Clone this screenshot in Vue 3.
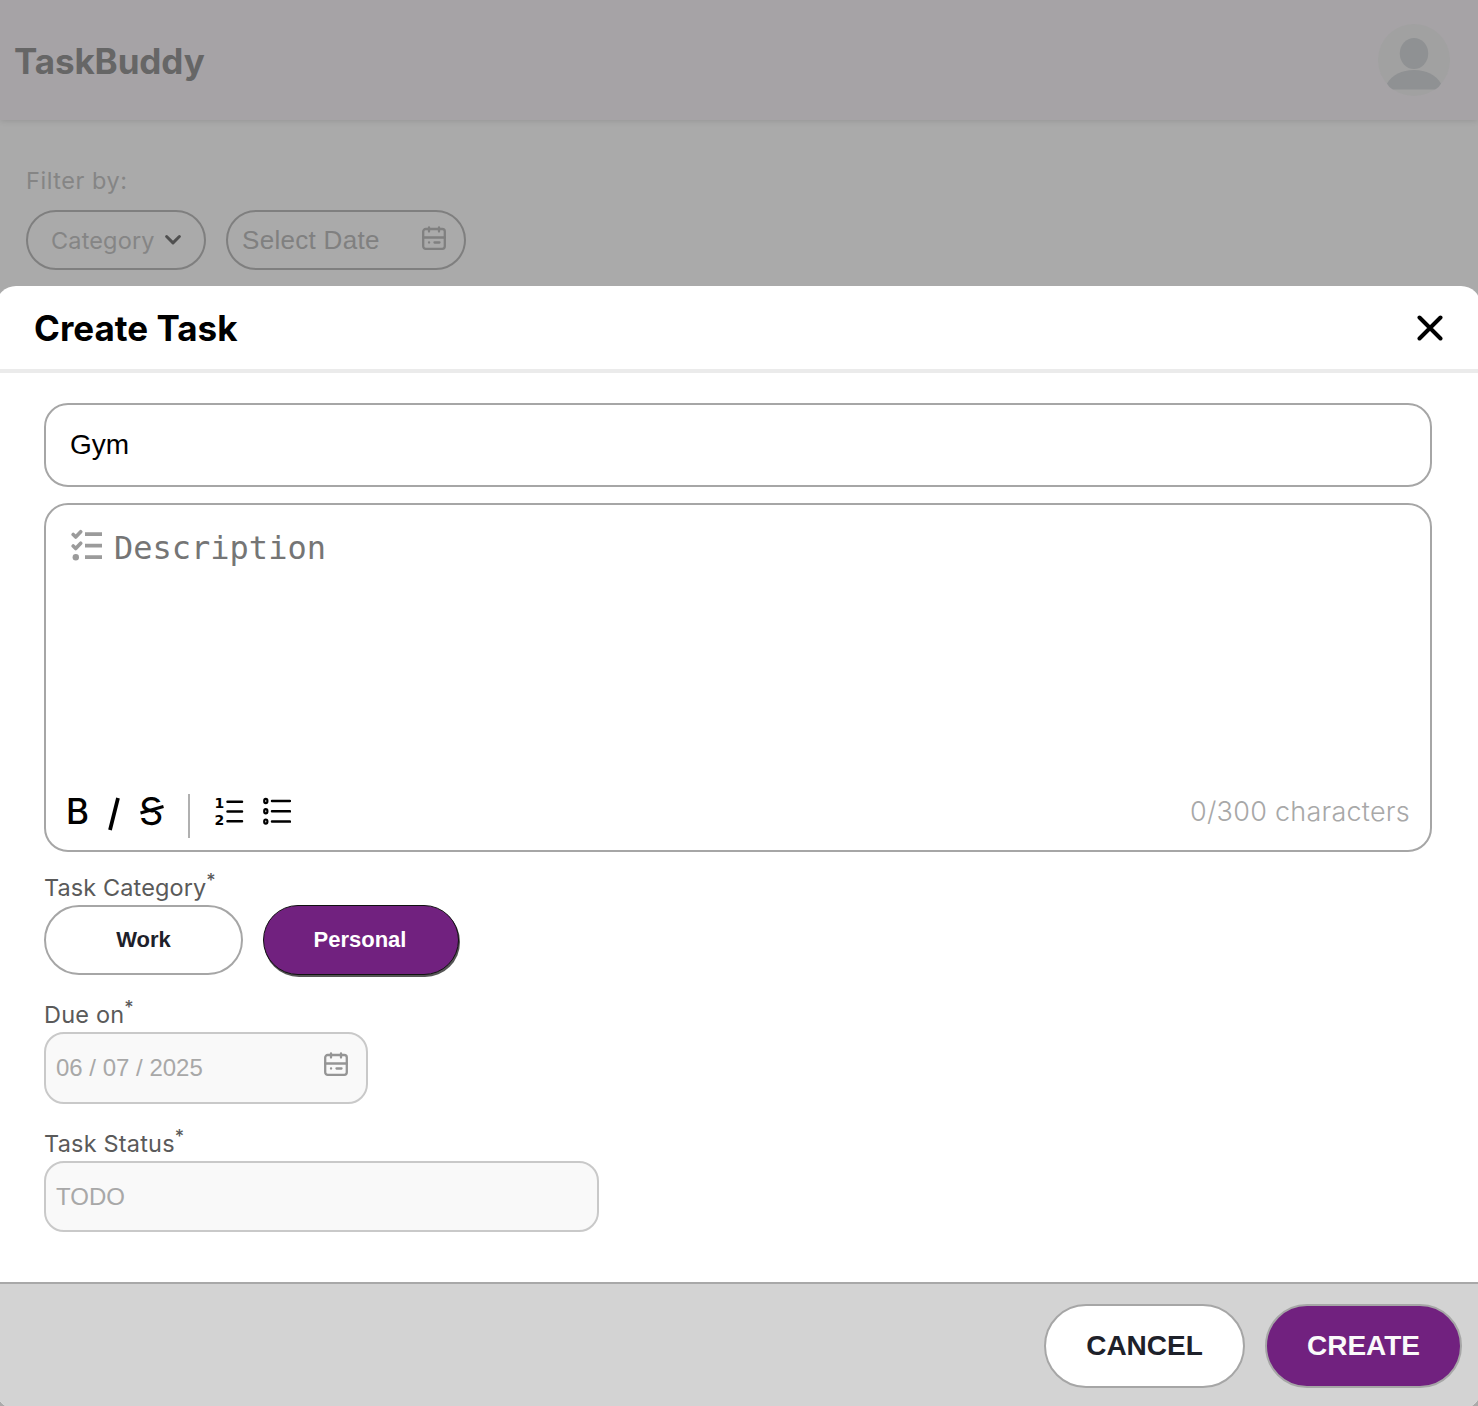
<script setup>
import { ref } from 'vue'

const title = ref('Gym')
const categories = ['Work', 'Personal']
const selected = ref('Personal')
const dueDate = '06 / 07 / 2025'
const status = 'TODO'
</script>

<template>
  <div class="page">
    <header class="topbar">
      <div class="brand">TaskBuddy</div>
      <svg class="avatar" width="72" height="72" viewBox="0 0 72 72">
        <circle cx="36" cy="36" r="36" fill="#a1a1a1" />
        <ellipse cx="36" cy="29.500" rx="14.200" ry="15.500" fill="#8f9193" />
        <path d="M9 59.500C14 51 24 46 36 46s22 5 27 13.500c-1.500 2.500-3 4.500-6 6H15c-3-1.500-4.500-3.500-6-6z" fill="#8f9193" />
      </svg>
    </header>

    <main class="filters">
      <div class="filter-label">Filter by:</div>
      <div class="filter-row">
        <div class="pill category">
          <span class="category-text">Category</span>
          <svg width="18" height="12" viewBox="0 0 18 12" fill="none" stroke="#505050" stroke-width="3" stroke-linecap="round" stroke-linejoin="round">
            <path d="M2.600 2.500 9 8.900l6.400-6.400" />
          </svg>
        </div>
        <div class="pill date">
          <span class="date-text">Select Date</span>
          <svg class="calendar" width="24" height="24" viewBox="0 0 24 24" fill="none" stroke="#808080" stroke-width="2.300" stroke-linecap="round">
            <rect x="1.200" y="3" width="21.600" height="19.800" rx="2.500" />
            <path d="M1.200 11.500h21.600M7 1.500v4M17 1.500v4M12.500 16.500h5M7 16.500h.1" />
          </svg>
        </div>
      </div>
    </main>

    <section class="modal">
      <div class="modal-head">
        <h2>Create Task</h2>
        <svg class="close" width="26" height="26" viewBox="0 0 26 26" stroke="#000" stroke-width="4" stroke-linecap="round">
          <path d="M2.500 2.500l21 21M23.500 2.500l-21 21" />
        </svg>
      </div>

      <div class="modal-body">
        <div class="title-box">{{ title }}</div>

        <div class="description-box">
          <div class="placeholder">
            <svg width="33" height="33" viewBox="0 0 33 33" fill="none" stroke="#9b9b9b">
              <path d="M14 6.200H31M14 17.700H31M14 29.200H31" stroke-width="3.800" />
              <path d="M2.200 6.500l2.500 2.500 5-5.300M2.200 18l2.500 2.500 5-5.300" stroke-width="3.600" stroke-linecap="round" stroke-linejoin="round" />
              <circle cx="4.800" cy="29.200" r="3.200" fill="#9b9b9b" stroke="none" />
            </svg>
            <span class="placeholder-text">Description</span>
          </div>
          <div class="toolbar">
            <span class="tool bold">B</span>
            <svg class="tool italic" width="12" height="34" viewBox="0 0 12 34">
              <path d="M2 33 10 1" stroke="#000" stroke-width="3.800" />
            </svg>
            <span class="tool strike">S
              <svg width="26" height="16" viewBox="0 0 26 16">
                <path d="M10 4.500 24 .5M2 15.500 16 11.500" stroke="#fff" stroke-width="3" />
                <path d="M1.500 11 24.500 4.500" stroke="#000" stroke-width="3" />
              </svg>
            </span>
            <span class="divider"></span>
            <svg class="tool numbered" width="28" height="32" viewBox="0 0 28 32">
              <path d="M12.500 5.700h14.500M12.500 15.500h14.500M12.500 25.300h14.500" stroke="#000" stroke-width="2.500" stroke-linecap="round" />
              <text x="-0.500" y="12" class="digit">1</text>
              <text x="-0.500" y="29" class="digit">2</text>
            </svg>
            <svg class="tool bulleted" width="28" height="32" viewBox="0 0 28 32" fill="none" stroke="#000">
              <path d="M9 5h18M9 15.300h18M9 25.600h18" stroke-width="2.500" stroke-linecap="round" />
              <ellipse cx="2.800" cy="5" rx="1.600" ry="2.100" stroke-width="2.200" />
              <ellipse cx="2.800" cy="15.300" rx="1.600" ry="2.100" stroke-width="2.200" />
              <ellipse cx="2.800" cy="25.600" rx="1.600" ry="2.100" stroke-width="2.200" />
            </svg>
            <span class="counter">0/300 characters</span>
          </div>
        </div>

        <div class="label category-label">Task Category<sup>*</sup></div>
        <div class="choices">
          <button v-for="c in categories" :key="c" class="choice" :class="{ active: c === selected }" @click="selected = c">{{ c }}</button>
        </div>

        <div class="label due-label">Due on<sup>*</sup></div>
        <div class="field due-field">
          <span>{{ dueDate }}</span>
          <svg class="calendar" width="24" height="24" viewBox="0 0 24 24" fill="none" stroke="#959595" stroke-width="2.300" stroke-linecap="round">
            <rect x="1.200" y="3" width="21.600" height="19.800" rx="2.500" />
            <path d="M1.200 11.500h21.600M7 1.500v4M17 1.500v4M12.500 16.500h5M7 16.500h.1" />
          </svg>
        </div>

        <div class="label status-label">Task Status<sup>*</sup></div>
        <div class="field status-field"><span>{{ status }}</span></div>
      </div>

      <footer class="modal-foot">
        <button class="action cancel">CANCEL</button>
        <button class="action create">CREATE</button>
      </footer>
    </section>
  </div>
</template>

<style>
body { background: #aaa; }
</style>

<style scoped>
.page {
  position: relative;
  width: 1478px;
  height: 1406px;
  overflow: hidden;
  background: #aaa;
  font-family: Inter, sans-serif;
}
.page * { box-sizing: border-box; }
svg { display: block; flex: none; }
button { margin: 0; padding: 0; }

.topbar {
  height: 120px;
  padding: 0 28px 0 14px;
  display: flex;
  align-items: center;
  justify-content: space-between;
  background: #a6a3a6;
  box-shadow: 0 1px 6px rgba(0, 0, 0, 0.12);
}
.brand {
  font-size: 35px;
  font-weight: 700;
  line-height: 40px;
  letter-spacing: -0.1px;
  color: #666;
  padding-top: 1px;
}

.filters { padding: 46px 26px 0; }
.filter-label {
  height: 44px;
  line-height: 30px;
  font-size: 23.500px;
  letter-spacing: 0.55px;
  color: #858585;
}
.filter-row { display: flex; gap: 20px; }
.pill {
  height: 60px;
  border: 2px solid #7f7f7f;
  border-radius: 30px;
  display: flex;
  align-items: center;
}
.category { width: 180px; padding-left: 23px; gap: 11px; color: #858585; }
.category-text { width: 102px; font-size: 23.500px; letter-spacing: 0.15px; white-space: nowrap; }
.date {
  width: 240px;
  padding: 0 18px 0 14px;
  justify-content: space-between;
  font-family: "Liberation Sans", sans-serif;
  font-size: 26px;
  letter-spacing: 0.3px;
  color: #808080;
}
.date .calendar { margin-top: -4px; }

.modal {
  position: absolute;
  left: -4px;
  top: 286px;
  width: 1485px;
  height: 1123px;
  border-radius: 20px;
  overflow: hidden;
  background: #fff;
  display: flex;
  flex-direction: column;
}
.modal-head {
  height: 87px;
  flex: none;
  border-bottom: 4px solid #ebebeb;
  padding: 0 38px;
  display: flex;
  align-items: center;
  justify-content: space-between;
}
h2 {
  margin: 0;
  font-size: 35px;
  line-height: 40px;
  font-weight: 700;
  color: #000;
}
.modal-body {
  flex: 1;
  padding: 30px 49px 0 48px;
  display: flex;
  flex-direction: column;
  align-items: flex-start;
}
.title-box {
  width: 1388px;
  height: 84px;
  padding-left: 24px;
  border: 2px solid #a6a6a6;
  border-radius: 24px;
  font: 28px/80px "Liberation Sans", sans-serif;
  color: #000;
}
.description-box {
  width: 1388px;
  height: 349px;
  margin-top: 16px;
  padding: 23px 20px 11px 20px;
  border: 2px solid #a6a6a6;
  border-radius: 24px;
  display: flex;
  flex-direction: column;
  justify-content: space-between;
}
.placeholder { display: flex; padding-left: 5px; gap: 10px; }
.placeholder-text {
  font: 32px/40px "DejaVu Sans Mono", monospace;
  color: #757575;
}
.toolbar { height: 46px; display: flex; align-items: center; color: #000; }
.tool, .counter { margin-bottom: 9px; }
.bold { width: 42px; margin-bottom: 11px; font-size: 35px; font-weight: 500; line-height: 40px; }
.italic { margin-bottom: 5px; }
.strike {
  position: relative;
  width: 27px;
  margin-left: 19px;
  margin-bottom: 10px;
  font-size: 38px;
  line-height: 40px;
  font-weight: 400;
}
.strike svg { position: absolute; left: 0; top: 11px; }
.divider { width: 2px; height: 44px; margin-left: 22px; background: #b0b0b0; }
.numbered { margin-left: 25px; overflow: visible; }
.digit { font: 700 14px "DejaVu Sans", sans-serif; fill: #000; }
.bulleted { margin-left: 20px; }
.counter {
  margin-left: auto;
  font-size: 27px;
  font-weight: 300;
  letter-spacing: 0.25px;
  color: #a8a8a8;
}

.label {
  height: 30px;
  line-height: 32px;
  font-size: 23.500px;
  color: #5a5a5a;
  white-space: nowrap;
}
.label sup { font-size: 18px; line-height: 0; vertical-align: 9px; font-weight: 500; }
.category-label { margin-top: 20px; letter-spacing: 0.1px; }
.choices { display: flex; gap: 20px; margin-top: 3px; }
.choice {
  width: 199px;
  height: 70px;
  border: 2px solid #a6a6a6;
  border-radius: 35px;
  background: #fff;
  font: 700 22px "Liberation Sans", sans-serif;
  color: #1e212a;
}
.choice.active {
  width: 196px;
  padding-right: 2px;
  border: 1px solid #111;
  background: #71217f;
  color: #fff;
  box-shadow: 1px 2px 0 #555;
}
.due-label { margin-top: 24px; letter-spacing: 0.2px; }
.field {
  border: 2px solid #c9c9c9;
  border-radius: 20px;
  background: #f9f9f9;
  padding: 0 18px 0 10px;
  display: flex;
  align-items: center;
  justify-content: space-between;
  font: 24px "Liberation Sans", sans-serif;
  color: #a8a8a8;
}
.due-field { width: 324px; height: 72px; margin-top: 3px; }
.due-field .calendar { margin-top: -8px; }
.status-label { margin-top: 24px; letter-spacing: 0.2px; }
.status-field { width: 555px; height: 71px; margin-top: 3px; }

.modal-foot {
  height: 127px;
  flex: none;
  border-top: 2px solid #a8a8a8;
  background: #d3d3d3;
  padding: 20px 19px 0 0;
  display: flex;
  justify-content: flex-end;
  align-items: flex-start;
  gap: 20px;
}
.action {
  height: 84px;
  border: 2px solid #a6a6a6;
  border-radius: 42px;
  font: 700 28px "Liberation Sans", sans-serif;
}
.cancel { width: 201px; background: #fff; color: #1e212a; }
.create { width: 197px; background: #71217f; color: #fafafa; }
</style>
